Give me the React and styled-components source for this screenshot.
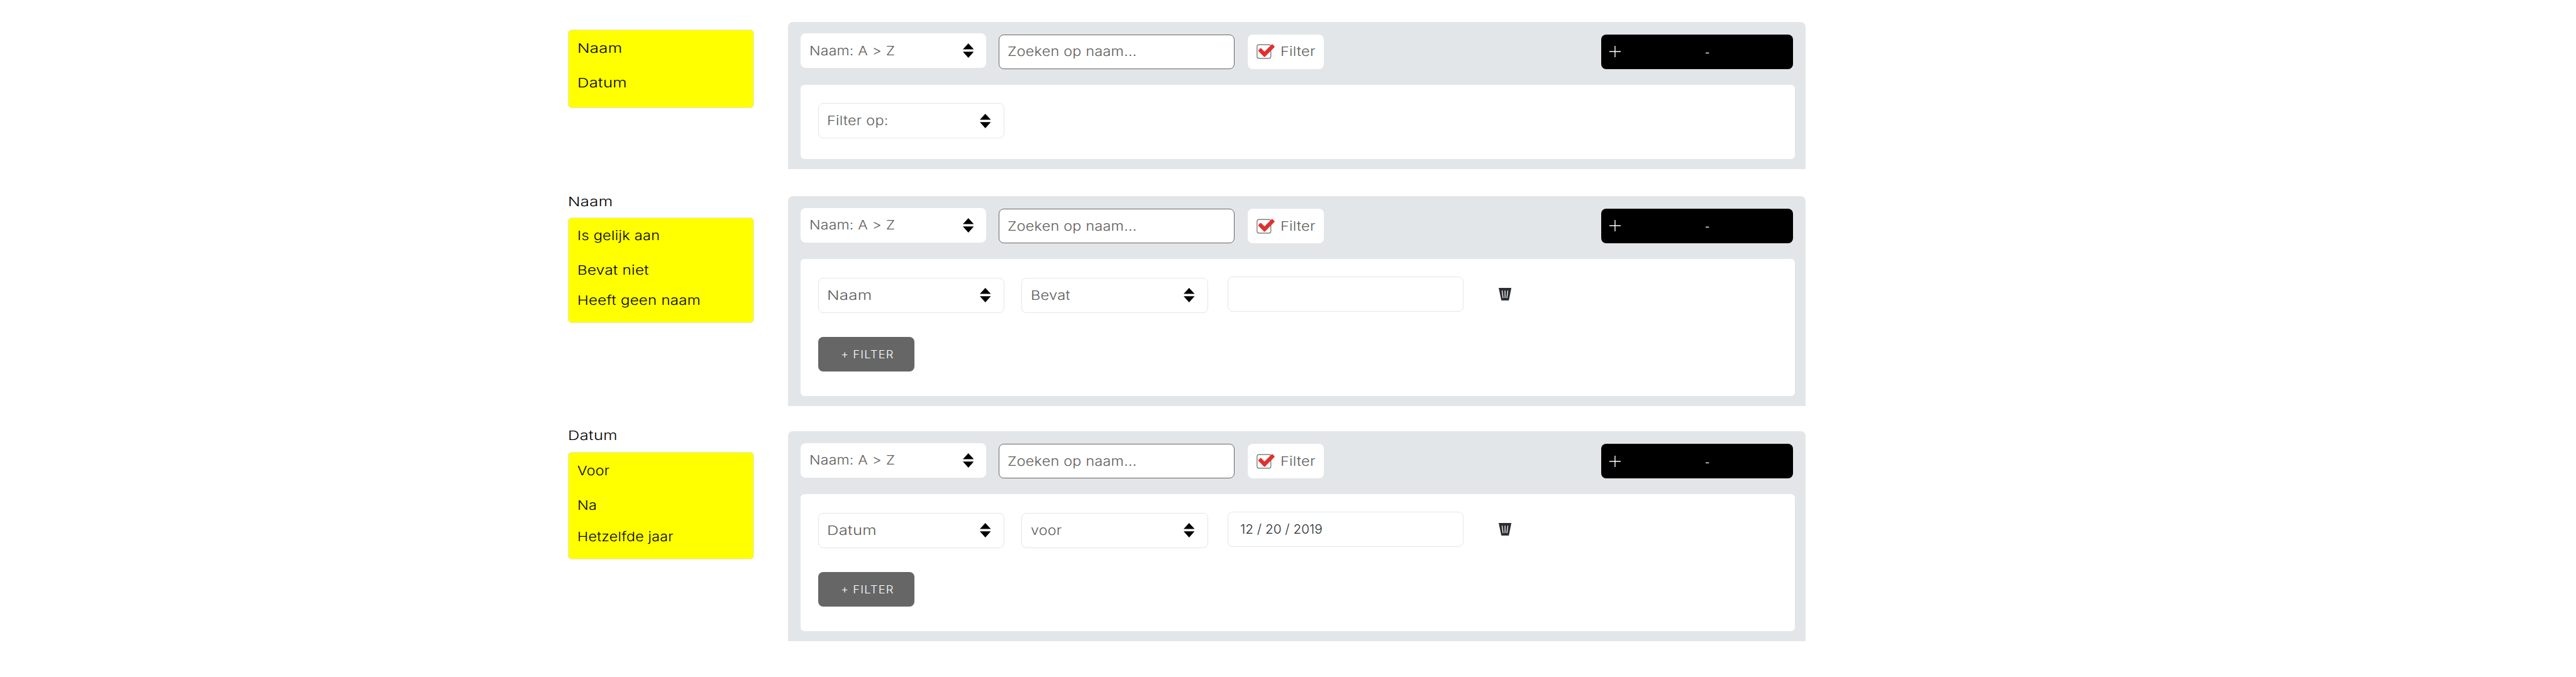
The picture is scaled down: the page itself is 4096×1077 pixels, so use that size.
import React from "react";
import styled, { createGlobalStyle } from "styled-components";

const GlobalStyle = createGlobalStyle`
  *, *::before, *::after { box-sizing: border-box; }
  body {
    margin: 0;
    background: #fff;
    font-family: Inter, "Open Sans", sans-serif;
  }
`;

const Page = styled.main`
  display: flex;
  flex-direction: column;
  width: 4096px;
  height: 1077px;
  padding: 35px 0 0 902.8px;
  overflow: hidden;
`;

const Section = styled.section`
  display: grid;
  grid-template-columns: 296px 1617.8px;
  column-gap: 54.3px;
  align-items: start;
  flex: none;
  height: ${(p) => p.$height}px;
`;

/* Wide lettering: glyphs are stretched a little from their left edge. */
const Text = styled.span`
  display: inline-block;
  flex: none;
  font-size: 20.6px;
  font-weight: 300;
  line-height: 28px;
  letter-spacing: ${(p) => p.$tracking ?? 0.2}px;
  white-space: pre;
  color: ${(p) => p.$color ?? "#5c5c5c"};
  transform: scaleX(${(p) => p.$stretch ?? 1});
  transform-origin: 0 50%;
`;

const Legend = styled.aside`
  display: flex;
  flex-direction: column;
  padding-top: ${(p) => p.$offset ?? 0}px;
`;

const LegendTitle = styled.div`
  display: flex;
  height: ${(p) => p.$height}px;
`;

const LegendBox = styled.ul`
  display: flex;
  flex-direction: column;
  height: ${(p) => p.$height}px;
  margin: 0;
  padding: 14.6px 0 0 14px;
  list-style: none;
  background: #ff0;
  border: 1px solid #e2e6e9;
  border-radius: 6px;
`;

const LegendItem = styled.li`
  display: flex;
  flex: none;
  height: ${(p) => p.$step ?? 54.7}px;
`;

const Panel = styled.div`
  display: flex;
  flex-direction: column;
  height: ${(p) => p.$height}px;
  margin-top: ${(p) => p.$offset ?? 0}px;
  padding: 18.2px 17.4px 16px 19.6px;
  background: #e2e6e9;
  border-radius: 8px 8px 0 0;
`;

const Toolbar = styled.div`
  display: flex;
  align-items: flex-start;
  flex: none;
  height: 81.5px;
  padding-right: 2.1px;
`;

const Field = styled.div`
  display: flex;
  align-items: center;
  flex: none;
  height: 55px;
  background: #fff;
  border-radius: 8px;
`;

const Select = styled(Field)`
  justify-content: space-between;
  width: ${(p) => (p.$outlined ? 296.2 : 295.2)}px;
  height: ${(p) => (p.$outlined ? 56 : 55)}px;
  padding: 0 ${(p) => (p.$outlined ? 20 : 19.6)}px 0 ${(p) => (p.$outlined ? 13.6 : 14.4)}px;
  border: ${(p) => (p.$outlined ? "1px solid #e2e6e9" : "none")};
`;

const Search = styled(Field)`
  width: 374.5px;
  margin: 1.6px 0 0 20.3px;
  padding-left: 13px;
  border: 1px solid #666;
`;

const FilterToggle = styled(Field)`
  width: 121.8px;
  margin: 1.6px 0 0 20.9px;
  padding-left: 14.6px;
  gap: 9px;
`;

const AddButton = styled(Field)`
  width: 305.3px;
  margin: 1.4px 0 0 auto;
  padding-left: 12.9px;
  background: #000;
`;

const Dash = styled.span`
  margin: 2px 0 0 134px;
  font-size: 16px;
  line-height: 24px;
  color: #fff;
`;

const FilterArea = styled.div`
  display: flex;
  flex-direction: column;
  flex: 1;
  padding: 28px 28.1px;
  background: #fff;
  border-radius: 6px;
`;

const FilterRow = styled.div`
  display: flex;
  align-items: flex-end;
  flex: none;
  height: 57.6px;
`;

const Operator = styled.div`
  display: flex;
  margin-left: 27.4px;
`;

const ValueInput = styled(Field)`
  align-self: flex-start;
  width: 375.3px;
  height: 56px;
  margin-left: 31.2px;
  padding-left: 19.5px;
  border: 1px solid #e2e6e9;
`;

const RemoveButton = styled.span`
  display: flex;
  align-self: flex-start;
  margin: 18px 0 0 55.9px;
`;

const AddFilter = styled(Field)`
  width: 153.4px;
  margin-top: 38.6px;
  padding-left: 36px;
  background: #666;

  ${Text} {
    font-size: 17.8px;
    line-height: 26px;
  }
`;

const SortArrows = () => (
  <svg width="17.5" height="23" viewBox="0 0 17.5 23">
    <path d="M8.75 0 17.5 9.6H0ZM0 13.3H17.5L8.75 23Z" fill="#000" />
  </svg>
);

const CheckIcon = () => (
  <svg width="29.2" height="23.7" viewBox="98 120 150 122">
    <rect x="102" y="126" width="113" height="112" rx="17" fill="#fff" stroke="#666" strokeWidth="6" />
    <path
      d="M119 175 132 160 163 191.500 226 129 239 143 163 220Z"
      fill="#de3230"
      stroke="#de3230"
      strokeWidth="13"
      strokeLinejoin="round"
    />
  </svg>
);

const PlusIcon = () => (
  <svg width="18" height="18" viewBox="0 0 18 18">
    <path d="M9 0V18M0 9H18" stroke="#fff" strokeWidth="1.400" fill="none" />
  </svg>
);

const TrashIcon = () => (
  <svg width="20.2" height="20" viewBox="63 44 104 103">
    <path d="M63 44H167L146 147H85Z" fill="#2a2e33" />
    <path d="M91 66 99 127M115 66V127M138 66 130 127" stroke="#fff" strokeWidth="6.500" fill="none" />
  </svg>
);

const stretches = {
  Naam: 1.255,
  Datum: 1.245,
  "Is gelijk aan": 1.145,
  "Bevat niet": 1.18,
  "Heeft geen naam": 1.17,
  Voor: 1.13,
  Na: 1.14,
  "Hetzelfde jaar": 1.13,
  "Naam: A > Z": 1.12,
  "Zoeken op naam...": 1.135,
  Filter: 1.145,
  "Filter op:": 1.14,
  Bevat: 1.15,
  voor: 1.13,
};

const Label = ({ children, color }) => (
  <Text $stretch={stretches[children]} $color={color}>
    {children}
  </Text>
);

const Dropdown = ({ label, outlined }) => (
  <Select $outlined={outlined}>
    <Label>{label}</Label>
    <SortArrows />
  </Select>
);

const TopBar = () => (
  <Toolbar>
    <Dropdown label="Naam: A > Z" />
    <Search>
      <Label>Zoeken op naam...</Label>
    </Search>
    <FilterToggle>
      <CheckIcon />
      <Label>Filter</Label>
    </FilterToggle>
    <AddButton>
      <PlusIcon />
      <Dash>-</Dash>
    </AddButton>
  </Toolbar>
);

const sections = [
  {
    height: 271.6,
    legend: { offset: 12.3, height: 124.9, items: [["Naam"], ["Datum"]] },
    panel: { height: 233.8, field: "Filter op:" },
  },
  {
    height: 372.5,
    legend: {
      title: "Naam",
      titleHeight: 39.1,
      height: 168.1,
      items: [["Is gelijk aan"], ["Bevat niet", 48.5], ["Heeft geen naam"]],
    },
    panel: { offset: 5.8, height: 333.2, field: "Naam", operator: "Bevat", value: "" },
  },
  {
    height: 372.5,
    legend: {
      title: "Datum",
      titleHeight: 40.2,
      height: 171.1,
      items: [["Voor"], ["Na", 50.8], ["Hetzelfde jaar"]],
    },
    panel: { offset: 7.4, height: 333.4, field: "Datum", operator: "voor", value: "12 / 20 / 2019" },
  },
];

export default function App() {
  return (
    <>
      <GlobalStyle />
      <Page>
        {sections.map(({ height, legend, panel }, i) => (
          <Section key={i} $height={height}>
            <Legend $offset={legend.offset}>
              {legend.title && (
                <LegendTitle $height={legend.titleHeight}>
                  <Label color="#000">{legend.title}</Label>
                </LegendTitle>
              )}
              <LegendBox $height={legend.height}>
                {legend.items.map(([text, step]) => (
                  <LegendItem key={text} $step={step}>
                    <Label color="#000">{text}</Label>
                  </LegendItem>
                ))}
              </LegendBox>
            </Legend>
            <Panel $height={panel.height} $offset={panel.offset}>
              <TopBar />
              <FilterArea>
                <FilterRow>
                  <Dropdown label={panel.field} outlined />
                  {panel.operator && (
                    <>
                      <Operator>
                        <Dropdown label={panel.operator} outlined />
                      </Operator>
                      <ValueInput>
                        <Text $tracking={0} $stretch={1.01} $color="#2a2e33">
                          {panel.value}
                        </Text>
                      </ValueInput>
                      <RemoveButton>
                        <TrashIcon />
                      </RemoveButton>
                    </>
                  )}
                </FilterRow>
                {panel.operator && (
                  <AddFilter>
                    <Text $tracking={1} $stretch={1.04} $color="#fff">
                      + FILTER
                    </Text>
                  </AddFilter>
                )}
              </FilterArea>
            </Panel>
          </Section>
        ))}
      </Page>
    </>
  );
}
